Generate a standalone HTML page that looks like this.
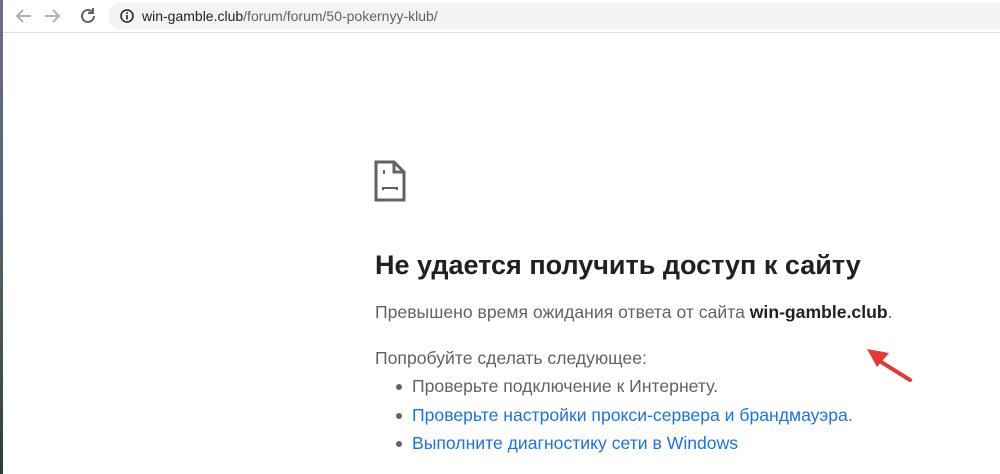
<!DOCTYPE html>
<html><head><meta charset="utf-8"><style>
body{margin:0;width:1000px;height:474px;overflow:hidden;background:#fff;font-family:"Liberation Sans",sans-serif;position:relative}
.strip{position:absolute;left:0;top:0;width:3px;height:474px;background:linear-gradient(#6b7180,#5a6378 40%,#44544e 75%,#2c3d34)}
.bar{position:absolute;left:3px;top:0;width:997px;height:32px;background:#fff;border-bottom:1px solid #dadce0}
.url{position:absolute;left:105px;top:3px;right:0;height:26px;background:#f1f3f4;border-radius:13px 0 0 13px;font-size:14px;line-height:26px;color:#5f6368}
.url b{font-weight:normal;color:#202124}
.c{position:absolute;left:375px;color:#5f6368;font-size:17.6px}
h1{position:absolute;left:375px;top:250px;margin:0;font-size:27px;font-weight:bold;color:#202124}
a{color:#1a73e8;text-decoration:none}
ul{margin:0;padding:0;list-style:none}
li{position:relative;padding-left:38px;height:28.5px}
li:before{content:"";position:absolute;left:22px;top:8px;width:6px;height:6px;border-radius:50%;background:#5f6368}
</style></head><body>
<div class="strip"></div>
<div class="bar">
<svg style="position:absolute;left:12px;top:6px" width="80" height="20" fill="none" stroke-width="2">
<path d="M2 10h14M8 4l-6 6 6 6" stroke="#b0b3b8"/>
<path d="M30 10h14M38 4l6 6-6 6" stroke="#b0b3b8"/>
<path d="M79 10a6 6 0 1 1-2-4.5" stroke="#5f6368"/><path d="M78 2v5h-5" stroke="#5f6368"/>
</svg>
<div class="url"><svg style="position:absolute;left:12px;top:6px" width="14" height="14"><circle cx="7" cy="7" r="6" fill="none" stroke="#202124" stroke-width="1.5"/><rect x="6.2" y="6" width="1.6" height="4.5" fill="#202124"/><rect x="6.2" y="3.3" width="1.6" height="1.6" fill="#202124"/></svg><span style="position:absolute;left:34px"><b>win-gamble.club</b>/forum/forum/50-pokernyy-klub/</span></div>
</div>
<svg style="position:absolute;left:374px;top:160px" width="34" height="42">
<path d="M2 2h18l10 10v28H2z" fill="none" stroke="#5f6368" stroke-width="3"/>
<path d="M20 2v10h10" fill="none" stroke="#5f6368" stroke-width="3"/>
<rect x="9" y="10" width="2" height="4" fill="#5f6368"/>
<path d="M9 30v-2h14v2" fill="none" stroke="#5f6368" stroke-width="2"/>
</svg>
<h1>Не удается получить доступ к сайту</h1>
<div class="c" style="top:302px">Превышено время ожидания ответа от сайта <b style="color:#202124">win-gamble.club</b>.</div>
<div class="c" style="top:348px">Попробуйте сделать следующее:</div>
<ul class="c" style="top:376px;left:374px">
<li>Проверьте подключение к Интернету.</li>
<li><a>Проверьте настройки прокси-сервера и брандмауэра</a>.</li>
<li><a>Выполните диагностику сети в Windows</a></li>
</ul>
<svg style="position:absolute;left:860px;top:340px" width="60" height="50"><path d="M50 40L18 20" stroke="#e53935" stroke-width="4" stroke-linecap="round"/><path d="M7 9l22 4-12 14z" fill="#e53935"/></svg>
</body></html>
